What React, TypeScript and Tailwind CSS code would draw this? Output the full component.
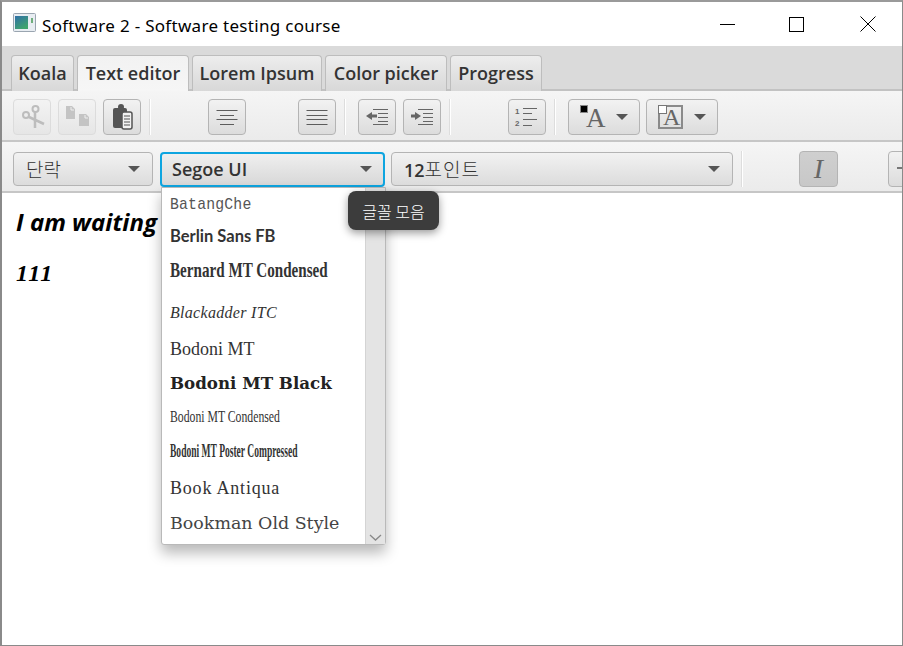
import { ReactNode } from "react";

const tabs = [
  { label: "Koala", w: "w-[63px]" },
  { label: "Text editor", w: "w-[112px]" },
  { label: "Lorem Ipsum", w: "w-[130px]" },
  { label: "Color picker", w: "w-[122px]" },
  { label: "Progress", w: "w-[92px]" },
];

const fonts = [
  { name: "BatangChe", h: "h-[32px]", cls: "font-['Liberation_Mono'] text-[17px] text-[#555] scale-x-[.87] tracking-[.2px]" },
  { name: "Berlin Sans FB", h: "h-[33px]", cls: "font-['Lato'] text-[16.5px] font-bold text-[#333] -translate-y-[1px]" },
  { name: "Bernard MT Condensed", h: "h-[38px]", cls: "font-['Liberation_Serif'] text-[21px] font-bold text-[#333] scale-x-[.72] -translate-y-[2px]" },
  { name: "Blackadder ITC", h: "h-[40px]", cls: "font-['Liberation_Serif'] text-[16px] italic text-[#333] tracking-[.3px] translate-y-[1px]" },
  { name: "Bodoni MT", h: "h-[35px]", cls: "font-['Liberation_Serif'] text-[18px] text-[#333]" },
  { name: "Bodoni MT Black", h: "h-[33px]", cls: "font-['DejaVu_Serif'] text-[17px] font-bold text-[#222] scale-x-[.98]" },
  { name: "Bodoni MT Condensed", h: "h-[34px]", cls: "font-['Liberation_Serif'] text-[17px] text-[#333] scale-x-[.69]" },
  { name: "Bodoni MT Poster Compressed", h: "h-[36px]", cls: "font-['Liberation_Serif'] text-[18px] font-bold text-[#333] scale-x-[.53] -translate-y-[1px]" },
  { name: "Book Antiqua", h: "h-[36px]", cls: "font-['Liberation_Serif'] text-[18px] text-[#333] tracking-[.8px]" },
  { name: "Bookman Old Style", h: "h-[36px]", cls: "font-['DejaVu_Serif'] text-[16px] text-[#444] scale-x-[1.09]" },
];

function Btn({ w = "w-[38px]", ml = "", off = false, on = false, pl = "", children }: { w?: string; ml?: string; off?: boolean; on?: boolean; pl?: string; children: ReactNode }) {
  const skin = off
    ? "border-[#dcdcdc] bg-gradient-to-b from-[#f3f3f3] to-[#e6e6e6]"
    : on
      ? "border-[#b4b4b4] bg-gradient-to-b from-[#cfcfcf] to-[#c8c8c8]"
      : "border-[#b4b4b4] bg-gradient-to-b from-[#f2f2f2] to-[#dcdcdc]";
  return (
    <div className={`${w} ${ml} ${pl} h-[36px] shrink-0 flex items-center ${pl ? "" : "justify-center"} rounded-[4px] border ${skin}`}>
      {children}
    </div>
  );
}

function Sep({ ml }: { ml: string }) {
  return <div className={`${ml} w-[2px] h-[36px] shrink-0 bg-[#dddddd] border-r border-white`} />;
}

function Arrow({ className = "" }: { className?: string }) {
  return <div className={`w-0 h-0 border-x-[6px] border-x-transparent border-t-[6px] border-t-[#555] ${className}`} />;
}

const lineY = [3.5, 8.5, 12.5, 17.5];

function Lines({ rows }: { rows: [number, number][] }) {
  return (
    <svg width="24" height="20" viewBox="0 0 24 20" stroke="#5c5c5c" strokeWidth="1">
      {rows.map(([a, b], i) => (
        <line key={i} x1={a} x2={b} y1={lineY[i]} y2={lineY[i]} />
      ))}
    </svg>
  );
}

function Indent({ left }: { left: boolean }) {
  return (
    <svg width="26" height="20" viewBox="0 0 26 20" fill="#666" stroke="#666">
      <line x1="9" x2="24" y1="2.5" y2="2.5" />
      <line x1="14" x2="24" y1="6.5" y2="6.5" />
      <line x1="14" x2="24" y1="10.5" y2="10.5" />
      <line x1="14" x2="24" y1="14.5" y2="14.5" />
      <line x1="9" x2="24" y1="17.5" y2="17.5" />
      {left ? (
        <path d="M2 9 L8 5 V7.5 H13 V10.5 H8 V13 Z" stroke="none" />
      ) : (
        <path d="M12 9 L6 5 V7.5 H2 V10.5 H6 V13 Z" stroke="none" />
      )}
    </svg>
  );
}

export default function App() {
  return (
    <div className="relative w-[903px] h-[646px] overflow-hidden bg-white font-['Open_Sans',sans-serif] border-t-2 border-t-[#9a9a9a] border-l-2 border-l-[#8a8a8a] border-r border-r-[#8a8a8a] border-b border-b-[#8a8a8a]">
      {/* title bar */}
      <div className="h-[44px] flex items-center bg-white">
        <svg width="23" height="19" viewBox="0 0 23 19" className="ml-[11px] -mt-[3px]">
          <defs>
            <linearGradient id="appIcon" x1="0" y1="0" x2="0.6" y2="1">
              <stop offset="0" stopColor="#2f6fa8" />
              <stop offset="1" stopColor="#3fa56c" />
            </linearGradient>
          </defs>
          <rect x="0.5" y="0.5" width="22" height="18" rx="1" fill="#e8edf2" stroke="#9aa5b0" />
          <rect x="2" y="3" width="13" height="13" fill="url(#appIcon)" />
          <rect x="18" y="5" width="2" height="5" fill="#6fae7c" />
        </svg>
        <span className="ml-[6px] mt-[3px] text-[17px] tracking-[.3px] text-black font-['Noto_Sans',sans-serif]">Software 2 - Software testing course</span>
        <div className="ml-auto flex items-center mr-[26px]">
          <div className="w-[15px] h-px bg-black" />
          <div className="ml-[54px] w-[15px] h-[15px] border border-black" />
          <svg className="ml-[56px]" width="16" height="16" viewBox="0 0 16 16" stroke="#000">
            <path d="M0.5 0.5 L15.5 15.5 M15.5 0.5 L0.5 15.5" />
          </svg>
        </div>
      </div>

      {/* tabs */}
      <div className="h-[45px] bg-[#dadada] border-b-2 border-[#c2c2c2] flex items-end pl-[9px] gap-[3px]">
        {tabs.map((t, i) => (
          <div
            key={t.label}
            className={`${t.w} shrink-0 h-[36px] -mb-[2px] pb-[1px] flex items-center justify-center rounded-t-[4px] border border-b-0 border-[#bdbdbd] text-[18px] font-semibold text-[#333] ${
              i === 1 ? "bg-gradient-to-b from-[#f2f2f2] to-[#f6f6f6] z-10" : "bg-gradient-to-b from-[#ededed] to-[#d8d8d8]"
            }`}
          >
            {t.label}
          </div>
        ))}
      </div>

      {/* toolbar 1 */}
      <div className="h-[51px] flex items-center pl-[11px] pt-[2px] bg-gradient-to-b from-[#f5f5f5] to-[#ebebeb] border-b-2 border-[#c6c6c6]">
        <Btn off>
          <svg width="30" height="30" viewBox="0 0 30 30" fill="none" stroke="#bdbdbd" strokeWidth="2">
            <circle cx="9" cy="13" r="3" />
            <circle cx="18.5" cy="7" r="3" />
            <path d="M12 15 L27 22 M18 10 L18 26" strokeWidth="2.5" />
          </svg>
        </Btn>
        <Btn off ml="ml-[7px]">
          <svg width="30" height="24" viewBox="0 0 30 24" fill="#c4c4c4">
            <path d="M4 1 H10 L13 4 V14 H4 Z M17 9 H24 L27 12 V21 H17 Z" />
            <path d="M9 2 V5 H12 M23 10 V13 H26" fill="none" stroke="#eeeeee" />
          </svg>
        </Btn>
        <Btn ml="ml-[7px]">
          <svg width="24" height="28" viewBox="0 0 24 28">
            <circle cx="11" cy="4" r="3" fill="#555" />
            <rect x="3" y="5" width="14" height="20" rx="2" fill="#555" />
            <rect x="12" y="9" width="10" height="17" rx="2" fill="#f2f2f2" stroke="#555" strokeWidth="1.5" />
            <path d="M14 13 H20 M14 16 H20 M14 19 H20 M14 22 H20" stroke="#555" />
          </svg>
        </Btn>
        <Sep ml="ml-[8px]" />
        <Btn ml="ml-[57px]">
          <Lines rows={[[1.5, 22.5], [5, 19], [1.5, 22.5], [5, 19]]} />
        </Btn>
        <Btn ml="ml-[52px]">
          <Lines rows={[[1.5, 22.5], [1.5, 22.5], [1.5, 22.5], [1.5, 22.5]]} />
        </Btn>
        <Sep ml="ml-[8px]" />
        <Btn ml="ml-[12px]">
          <Indent left />
        </Btn>
        <Btn ml="ml-[7px]">
          <Indent left={false} />
        </Btn>
        <Sep ml="ml-[8px]" />
        <Btn ml="ml-[57px]">
          <svg width="26" height="24" viewBox="0 0 26 24" stroke="#666">
            <text x="1" y="9" fontSize="8" fontWeight="700" fill="#666" stroke="none" fontFamily="Liberation Sans">1</text>
            <text x="1" y="21" fontSize="8" fontWeight="700" fill="#666" stroke="none" fontFamily="Liberation Sans">2</text>
            <path d="M9 3.5 H23 M9 8.5 H18 M9 14.5 H23 M9 20.5 H18" />
          </svg>
        </Btn>
        <Sep ml="ml-[8px]" />
        <Btn w="w-[72px]" ml="ml-[12px]" pl="pl-[11px]">
          <div className="relative w-[26px] h-[24px]">
            <div className="absolute left-0 top-0 w-[8px] h-[8px] bg-black border border-[#888]" />
            <span className="absolute left-[6px] top-[-3px] text-[27px] leading-[32px] text-[#666] font-['Liberation_Serif']">A</span>
          </div>
          <Arrow className="ml-[10px]" />
        </Btn>
        <Btn w="w-[72px]" ml="ml-[6px]" pl="pl-[11px]">
          <div className="relative w-[25px] h-[24px] border-2 border-[#8a8a8a]">
            <div className="absolute -left-[2px] -top-[2px] w-[9px] h-[9px] bg-white border border-[#777]" />
            <span className="absolute left-[3px] -top-[5px] text-[24px] leading-[30px] text-[#666] font-['Liberation_Serif']">A</span>
          </div>
          <Arrow className="ml-[11px]" />
        </Btn>
      </div>

      {/* toolbar 2 */}
      <div className="h-[51px] flex items-center pl-[11px] pt-[5px] bg-gradient-to-b from-[#f5f5f5] to-[#ebebeb] border-b-2 border-[#c6c6c6]">
        <div className="w-[140px] shrink-0 h-[34px] flex items-center justify-between px-[12px] rounded-[4px] border border-[#b4b4b4] bg-gradient-to-b from-[#f2f2f2] to-[#dcdcdc]">
          <span className="text-[19px] font-light text-[#333] font-['Noto_Sans_CJK_KR',sans-serif]">단락</span>
          <Arrow />
        </div>
        <div className="ml-[7px] w-[225px] shrink-0 h-[35px] flex items-center justify-between pl-[10px] pr-[11px] rounded-[4px] border-2 border-[#0ea5e0] bg-gradient-to-b from-[#efefef] to-[#d8d8d8]">
          <span className="text-[18px] font-semibold text-[#333]">Segoe UI</span>
          <Arrow />
        </div>
        <div className="ml-[6px] w-[342px] shrink-0 h-[34px] flex items-center justify-between pl-[12px] pr-[12px] rounded-[4px] border border-[#b4b4b4] bg-gradient-to-b from-[#f2f2f2] to-[#dcdcdc]">
          <span className="text-[18px] text-[#333]">
            <b className="font-semibold">12</b>
            <span className="text-[19px] font-light font-['Noto_Sans_CJK_KR',sans-serif] tracking-[1px]">포인트</span>
          </span>
          <Arrow />
        </div>
        <Sep ml="ml-[8px]" />
        <Btn on ml="ml-[56px]" w="w-[39px]">
          <span className="font-['Liberation_Serif'] italic text-[28px] leading-none text-[#666]">I</span>
        </Btn>
        <Btn ml="ml-[50px]" w="w-[39px]" pl="pl-[8px]">
          <span className="w-[10px] h-[2px] -mt-[2px] bg-[#777]" />
        </Btn>
      </div>

      {/* editor */}
      <div className="pl-[14px] pt-[13px] italic font-bold text-black">
        <p className="leading-[32px] text-[24px]">I am waiting</p>
        <p className="leading-[32px] mt-[19px] text-[24px] tracking-[1.5px] font-['Liberation_Serif']">111</p>
      </div>

      {/* font list popup */}
      <div className="absolute left-[159px] top-[185px] w-[225px] h-[358px] flex bg-white border border-[#b9b9b9] rounded-b-[3px] shadow-[0_8px_14px_rgba(0,0,0,.28)]">
        <div className="flex-1 overflow-hidden pt-[1px]">
          {fonts.map((f) => (
            <div key={f.name} className={`${f.h} flex items-center pl-[8px] whitespace-nowrap`}>
              <span className={`inline-block origin-left ${f.cls}`}>{f.name}</span>
            </div>
          ))}
        </div>
        <div className="relative w-[20px] bg-[#e4e4e4] border-l border-[#d4d4d4]">
          <svg className="absolute left-[3px] bottom-[2px]" width="13" height="9" viewBox="0 0 13 9" fill="none" stroke="#888" strokeWidth="1.3">
            <path d="M1 2 L6.5 7 L12 2" />
          </svg>
          <svg className="absolute left-[3px] top-[2px]" width="13" height="9" viewBox="0 0 13 9" fill="none" stroke="#888" strokeWidth="1.3">
            <path d="M1 7 L6.5 2 L12 7" />
          </svg>
        </div>
      </div>

      {/* tooltip */}
      <div className="absolute left-[346px] top-[189px] w-[91px] h-[39px] flex items-center justify-center rounded-[8px] bg-[#3c3c3c] shadow-[0_3px_8px_rgba(0,0,0,.4)] text-[16px] font-light text-white font-['Noto_Sans_CJK_KR',sans-serif]">
        글꼴 모음
      </div>
    </div>
  );
}
